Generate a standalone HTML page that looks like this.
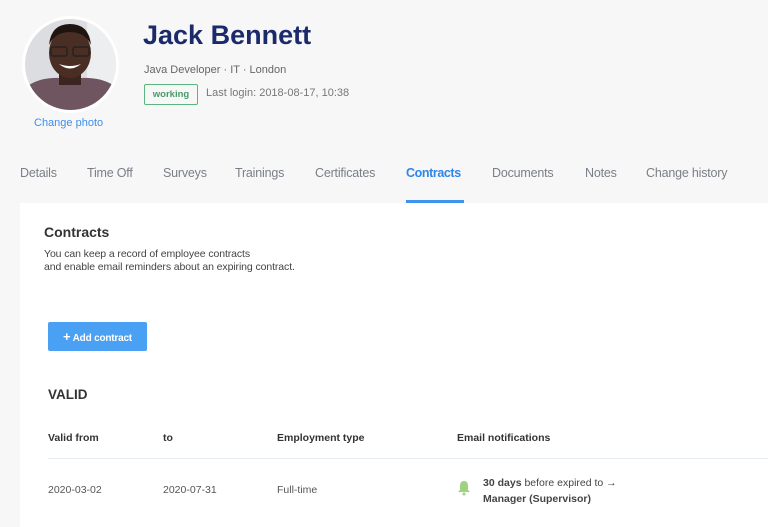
<!DOCTYPE html>
<html><head><style>
*{margin:0;padding:0;box-sizing:border-box}
body{width:768px;height:527px;overflow:hidden;background:#f7f7f8;font-family:"Liberation Sans",sans-serif;position:relative;color:#333}
.a{position:absolute;white-space:nowrap}
.tab{position:absolute;top:166px;font-size:12.5px;color:#7a7f87;letter-spacing:-0.2px}
</style></head><body>
<div class="a" style="left:22px;top:16px;width:97px;height:97px;border-radius:50%;background:#fff;padding:3px">
<svg width="91" height="91" viewBox="0 0 91 91"><defs><clipPath id="c"><circle cx="45.5" cy="45.5" r="45.5"/></clipPath></defs>
<g clip-path="url(#c)"><rect width="91" height="91" fill="#dcdde0"/><rect x="62" width="29" height="91" fill="#eceef0"/>
<path d="M0 91 L4 66 Q20 56 45 60 Q72 56 88 66 L91 91Z" fill="#6e5560"/>
<rect x="34" y="52" width="22" height="14" fill="#3a2520"/>
<ellipse cx="45" cy="34" rx="21" ry="25" fill="#4a2e24"/>
<path d="M24 26 Q26 5 45 5 Q64 5 66 26 Q60 13 45 13 Q30 13 24 26Z" fill="#1e1410"/>
<rect x="26" y="28" width="16" height="9" rx="2" fill="none" stroke="#222" stroke-width="1.4"/><rect x="48" y="28" width="16" height="9" rx="2" fill="none" stroke="#222" stroke-width="1.4"/>
<path d="M34 45 Q45 54 56 45 Q45 49 34 45Z" fill="#fff"/></g></svg></div>
<div class="a" style="left:34px;top:117px;font-size:11px;color:#3d8fe8">Change photo</div>
<div class="a" style="left:143px;top:20px;font-size:27px;font-weight:bold;color:#1b2a6b">Jack Bennett</div>
<div class="a" style="left:144px;top:64px;font-size:11px;color:#666">Java Developer · IT · London</div>
<div class="a" style="left:144px;top:84px;width:54px;height:21px;border:1px solid #5bb57e;border-radius:2px;font-size:9.5px;font-weight:bold;color:#4a9a68;text-align:center;line-height:19px">working</div>
<div class="a" style="left:206px;top:87px;font-size:11px;color:#777">Last login: 2018-08-17, 10:38</div>
<div class="tab" style="left:20px">Details</div>
<div class="tab" style="left:87px">Time Off</div>
<div class="tab" style="left:163px">Surveys</div>
<div class="tab" style="left:235px">Trainings</div>
<div class="tab" style="left:315px">Certificates</div>
<div class="tab" style="left:406px;color:#2f86e8;font-weight:bold;letter-spacing:-0.4px">Contracts</div>
<div class="a" style="left:406px;top:200px;width:58px;height:3px;background:#3d93ee"></div>
<div class="tab" style="left:492px">Documents</div>
<div class="tab" style="left:585px">Notes</div>
<div class="tab" style="left:646px">Change history</div>
<div class="a" style="left:20px;top:203px;width:748px;height:324px;background:#fff"></div>
<div class="a" style="left:44px;top:224px;font-size:14px;font-weight:bold;color:#333">Contracts</div>
<div class="a" style="left:44px;top:248px;font-size:10.5px;color:#444;line-height:13px;letter-spacing:-0.1px">You can keep a record of employee contracts<br>and enable email reminders about an expiring contract.</div>
<div class="a" style="left:48px;top:322px;width:99px;height:29px;background:#4aa0f3;border-radius:2px;color:#fff;font-size:10px;font-weight:bold;line-height:29px;text-align:center;letter-spacing:-0.2px"><span style="font-size:13px">+</span> Add contract</div>
<div class="a" style="left:48px;top:387px;font-size:13.5px;font-weight:bold;color:#333">VALID</div>
<div class="a" style="left:48px;top:432px;font-size:10.5px;font-weight:bold;color:#333">Valid from</div>
<div class="a" style="left:163px;top:432px;font-size:10.5px;font-weight:bold;color:#333">to</div>
<div class="a" style="left:277px;top:432px;font-size:10.5px;font-weight:bold;color:#333">Employment type</div>
<div class="a" style="left:457px;top:432px;font-size:10.5px;font-weight:bold;color:#333">Email notifications</div>
<div class="a" style="left:48px;top:458px;width:720px;height:1px;background:#e6ecf2"></div>
<div class="a" style="left:48px;top:484px;font-size:10.5px;color:#555">2020-03-02</div>
<div class="a" style="left:163px;top:484px;font-size:10.5px;color:#555">2020-07-31</div>
<div class="a" style="left:277px;top:484px;font-size:10.5px;color:#555">Full-time</div>
<svg class="a" style="left:457px;top:480px" width="14" height="16" viewBox="0 0 14 16"><path d="M7 1 Q3 1 3 6 L3 10 L1 12 L13 12 L11 10 L11 6 Q11 1 7 1Z" fill="#9ed27f"/><circle cx="7" cy="14" r="1.5" fill="#9ed27f"/></svg>
<div class="a" style="left:483px;top:475px;font-size:10.5px;color:#444;line-height:16px"><b>30 days</b> before expired to →<br><b>Manager (Supervisor)</b></div>
</body></html>
